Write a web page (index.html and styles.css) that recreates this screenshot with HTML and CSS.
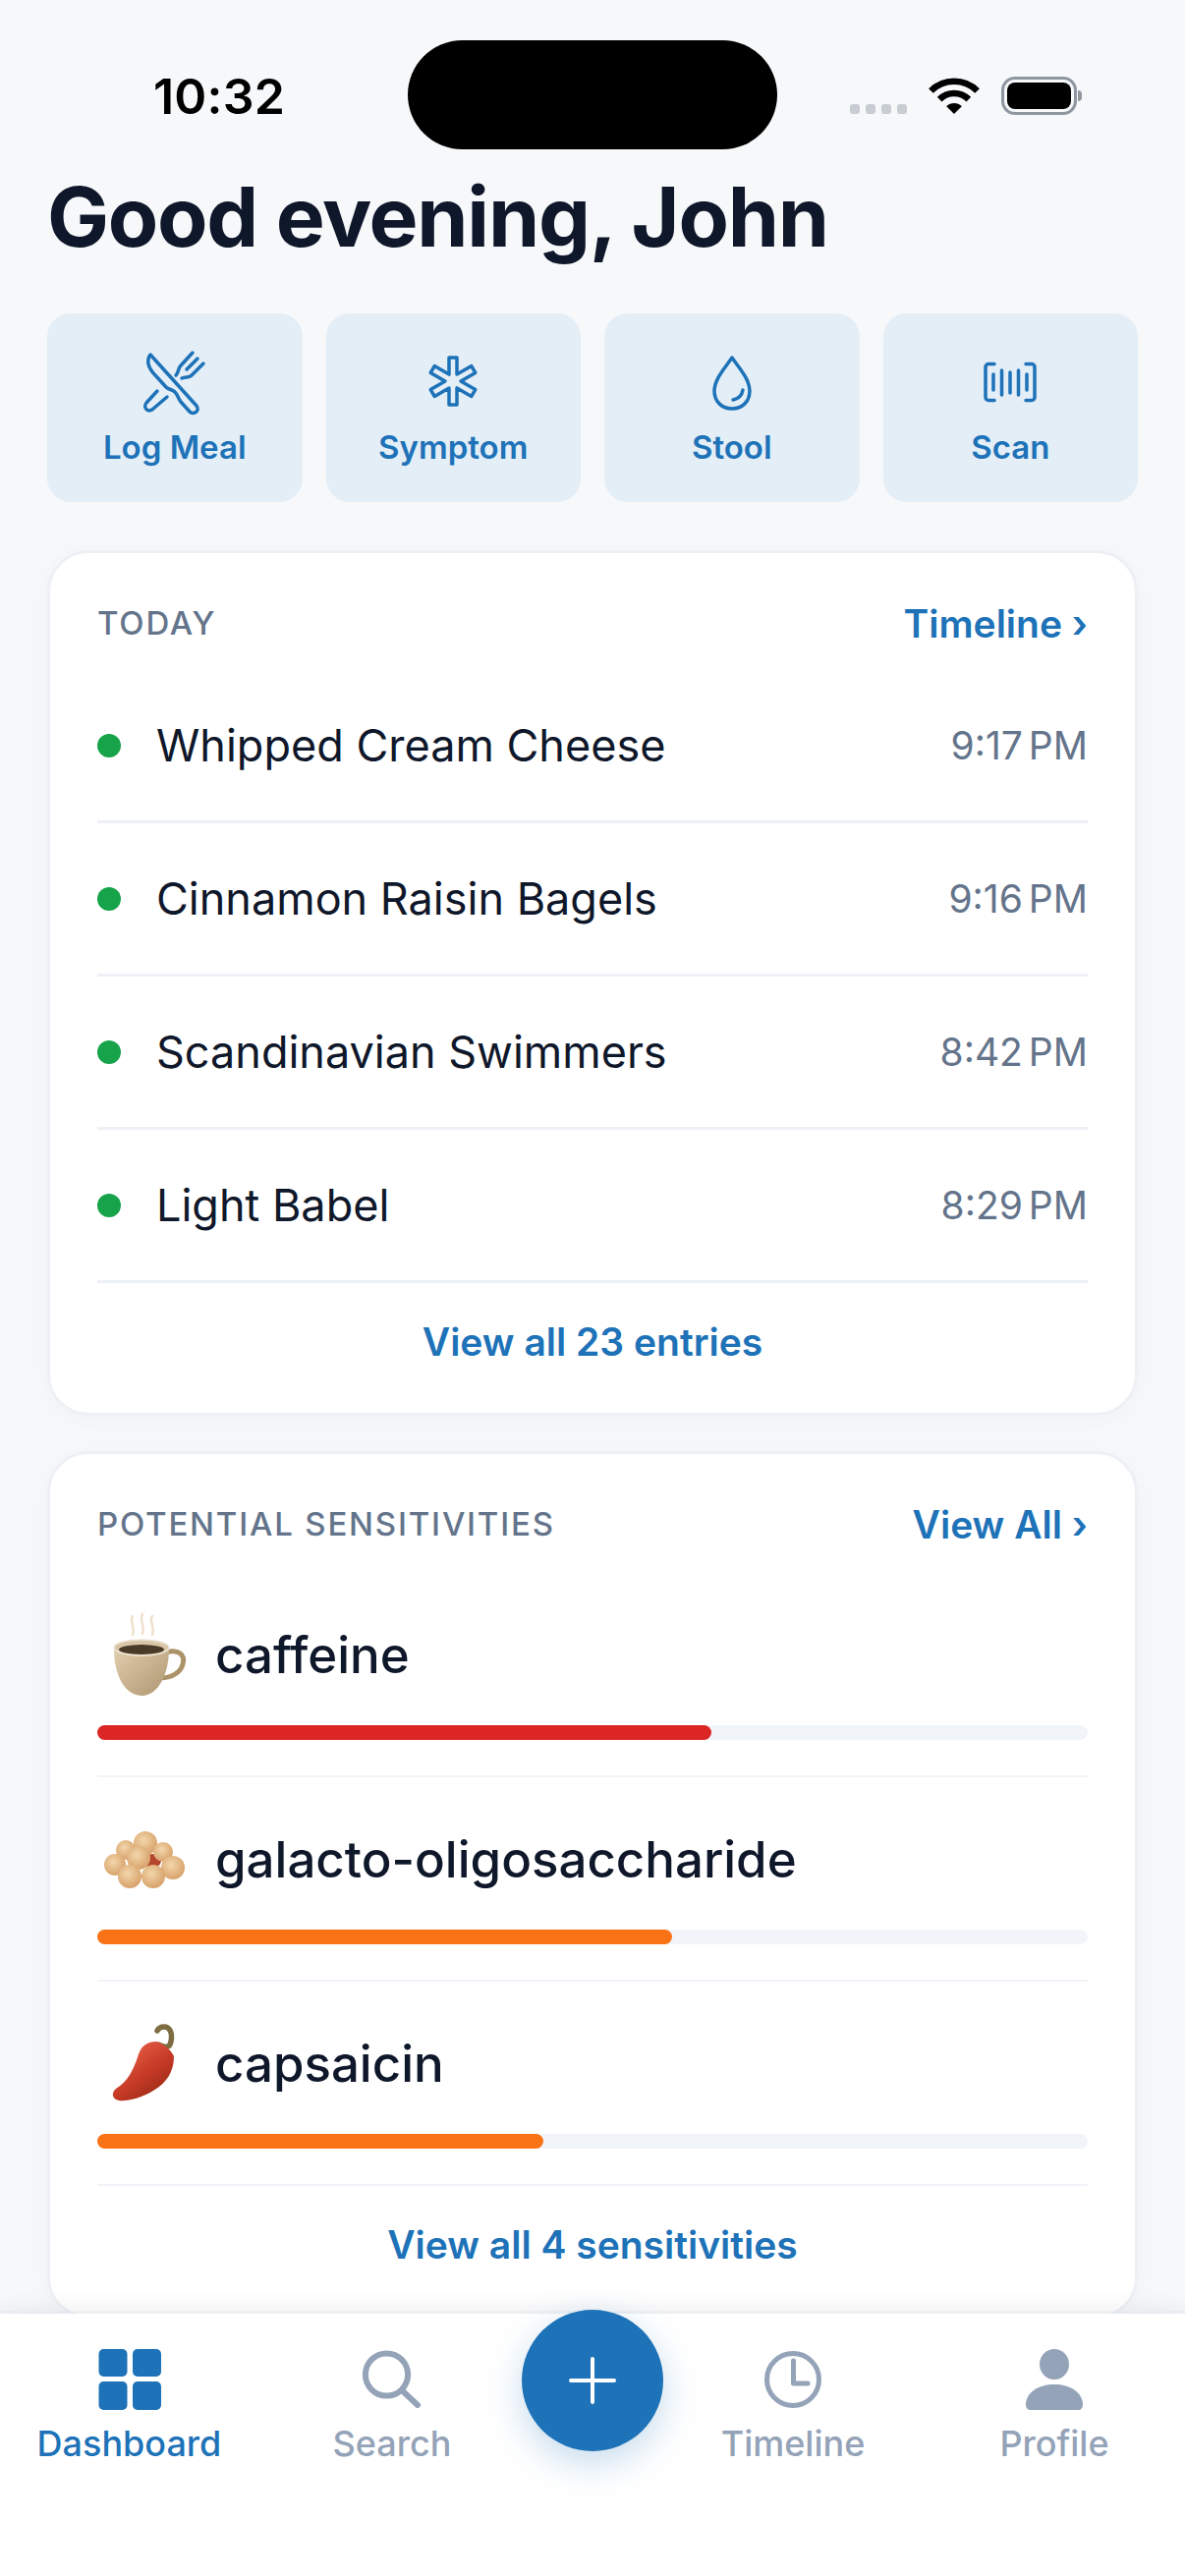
FILE: index.html
```html
<!DOCTYPE html>
<html lang="en">
<head>
    <meta charset="UTF-8">
    <meta name="viewport" content="width=device-width, initial-scale=1.0">
    <title>Dashboard</title>
    <link rel="stylesheet" href="styles.css">
</head>
<body>
    <div class="screen">

        <div class="status-bar">
            <div class="status-time">10:32</div>
            <div class="island"></div>
            <div class="status-icons">
                <div class="signal"><span></span><span></span><span></span><span></span></div>
                <svg class="wifi" width="52" height="38" viewBox="0 0 52 38">
                    <path d="M2.45 13.5A33.3 33.3 0 0 1 49.55 13.5" fill="none" stroke="#000" stroke-width="6.7"/>
                    <path d="M11.15 22.15A21 21 0 0 1 40.85 22.15" fill="none" stroke="#000" stroke-width="6.6"/>
                    <path d="M26 37L18.2 29.2A11 11 0 0 1 33.8 29.2Z" fill="#000"/>
                </svg>
                <div class="battery"><div class="battery-level"></div></div>
                <div class="battery-nub"></div>
            </div>
        </div>

        <h1 class="greeting">Good evening, John</h1>

        <div class="quick-actions">
            <div class="quick-btn">
                <svg class="quick-icon" width="72" height="72" viewBox="0 0 72 72">
                    <path d="M11 9L58 61C62 66 55 71 51 67L42 57C39 53 39 50 36 47C33 44 30 45 27 42L17 31C10 24 6 16 11 9Z"/>
                    <path d="M18 46L7 58C3 63 9 69 14 64L28 52"/>
                    <path d="M54 7L42 20C39 23 40 27 37 30"/>
                    <path d="M59 13L48 24"/>
                    <path d="M65 18L53 30C50 33 47 31 43 33"/>
                </svg>
                <span>Log Meal</span>
            </div>
            <div class="quick-btn">
                <svg class="quick-icon" width="72" height="72" viewBox="-36 -36 72 72">
                    <polygon points="-4,-24 4,-24 4,-6.93 18.78,-15.46 22.78,-8.54 8,0 22.78,8.54 18.78,15.46 4,6.93 4,24 -4,24 -4,6.93 -18.78,15.46 -22.78,8.54 -8,0 -22.78,-8.54 -18.78,-15.46 -4,-6.93"/>
                </svg>
                <span>Symptom</span>
            </div>
            <div class="quick-btn">
                <svg class="quick-icon" width="72" height="72" viewBox="0 0 72 72">
                    <path d="M36 12C28 24 18 34 18 46C18 57 26 64 36 64C46 64 54 57 54 46C54 34 44 24 36 12Z"/>
                    <path d="M37 55C42 54 46 51 47 45"/>
                </svg>
                <span>Stool</span>
            </div>
            <div class="quick-btn">
                <svg class="quick-icon" width="72" height="72" viewBox="0 0 72 72">
                    <path d="M20 18.5H14A3 3 0 0 0 11 21.5V52.5A3 3 0 0 0 14 55.5H20"/>
                    <path d="M52 18.5H58A3 3 0 0 1 61 21.5V52.5A3 3 0 0 1 58 55.5H52"/>
                    <path d="M19 29V45M27.5 25V50M36 27V48M44.5 25V50M53 29V45"/>
                </svg>
                <span>Scan</span>
            </div>
        </div>

        <div class="card">
            <div class="card-head">
                <span class="card-title">TODAY</span>
                <span class="card-link">Timeline ›</span>
            </div>
            <div class="entry"><i class="dot"></i><span class="entry-name">Whipped Cream Cheese</span><span class="entry-time">9:17 PM</span></div>
            <div class="entry"><i class="dot"></i><span class="entry-name">Cinnamon Raisin Bagels</span><span class="entry-time">9:16 PM</span></div>
            <div class="entry"><i class="dot"></i><span class="entry-name">Scandinavian Swimmers</span><span class="entry-time">8:42 PM</span></div>
            <div class="entry"><i class="dot"></i><span class="entry-name">Light Babel</span><span class="entry-time">8:29 PM</span></div>
            <div class="card-foot">View all 23 entries</div>
        </div>

        <div class="card card-sens">
            <div class="card-head">
                <span class="card-title">POTENTIAL SENSITIVITIES</span>
                <span class="card-link">View All ›</span>
            </div>

            <div class="sens">
                <div class="sens-top">
                    <svg class="emoji" width="96" height="96" viewBox="0 0 96 96">
                        <defs>
                            <linearGradient id="cupFill" x1="0" y1="0" x2="1" y2="1">
                                <stop offset="0" stop-color="#e2cfae"/>
                                <stop offset="1" stop-color="#ae9570"/>
                            </linearGradient>
                        </defs>
                        <g fill="none" stroke="#eee0cd" stroke-width="2.5" stroke-linecap="round">
                            <path d="M36 7C32 12 39 17 36 26"/>
                            <path d="M46 5C42 11 49 16 46 25"/>
                            <path d="M56 7C52 12 59 17 56 26"/>
                        </g>
                        <path d="M70 44C82 40 90 46 87 56C85 64 76 70 64 70" fill="none" stroke="#ab9269" stroke-width="5"/>
                        <path d="M17 40C17 66 27 87 45 88C62 88 73 66 73 40Z" fill="url(#cupFill)"/>
                        <ellipse cx="45" cy="39" rx="28" ry="8" fill="#d9c6a6" stroke="#eee6d8" stroke-width="1.5"/>
                        <ellipse cx="45" cy="41" rx="23" ry="5" fill="#4a3b28"/>
                    </svg>
                    <span class="sens-name">caffeine</span>
                </div>
                <div class="bar"><div class="bar-fill bar-red" style="width: 62%"></div></div>
            </div>

            <div class="sens">
                <div class="sens-top">
                    <svg class="emoji" width="96" height="96" viewBox="0 0 96 96">
                        <defs>
                            <radialGradient id="pea" cx="0.42" cy="0.38" r="0.7">
                                <stop offset="0" stop-color="#f3d6ab"/>
                                <stop offset="1" stop-color="#d49c63"/>
                            </radialGradient>
                        </defs>
                        <ellipse cx="56" cy="48" rx="9" ry="7" fill="#b5452c"/>
                        <g fill="url(#pea)">
                            <circle cx="49" cy="30" r="12"/>
                            <circle cx="29" cy="37" r="10"/>
                            <circle cx="67" cy="39" r="10"/>
                            <circle cx="18" cy="52" r="11"/>
                            <circle cx="42" cy="45" r="12"/>
                            <circle cx="77" cy="55" r="12"/>
                            <circle cx="33" cy="64" r="12"/>
                            <circle cx="57" cy="64" r="12"/>
                        </g>
                    </svg>
                    <span class="sens-name">galacto-oligosaccharide</span>
                </div>
                <div class="bar"><div class="bar-fill bar-orange" style="width: 58%"></div></div>
            </div>

            <div class="sens">
                <div class="sens-top">
                    <svg class="emoji" width="96" height="96" viewBox="0 0 96 96">
                        <defs>
                            <linearGradient id="chili" x1="0.2" y1="0.1" x2="0.8" y2="0.9">
                                <stop offset="0" stop-color="#e8614a"/>
                                <stop offset="0.55" stop-color="#c63a26"/>
                                <stop offset="1" stop-color="#9c2b18"/>
                            </linearGradient>
                        </defs>
                        <path d="M62 27C70 31 74 30 75 24C77 14 73 9 68 9C64 9 62 11 61 13" fill="none" stroke="#7d6d41" stroke-width="5.5" stroke-linecap="round"/>
                        <path d="M19 72C31 65 37 52 41 40C44 29 50 24 60 24C67 26 75 32 78 39C78 54 71 66 57 74C44 82 30 85 22 84C15 83 14 76 19 72Z" fill="url(#chili)"/>
                    </svg>
                    <span class="sens-name">capsaicin</span>
                </div>
                <div class="bar"><div class="bar-fill bar-orange" style="width: 45%"></div></div>
            </div>

            <div class="card-foot">View all 4 sensitivities</div>
        </div>

        <div class="tab-bar">
            <div class="tab tab-active">
                <svg width="72" height="72" viewBox="0 0 72 72">
                    <rect x="3.5" y="5" width="29" height="28" rx="5"/>
                    <rect x="38" y="5" width="29" height="28" rx="5"/>
                    <rect x="3.5" y="38" width="29" height="29" rx="5"/>
                    <rect x="38" y="38" width="29" height="29" rx="5"/>
                </svg>
                <span>Dashboard</span>
            </div>
            <div class="tab">
                <svg width="72" height="72" viewBox="0 0 72 72">
                    <circle cx="30.5" cy="31" r="21.6" class="tab-line"/>
                    <path d="M46 47L62 62" class="tab-line"/>
                </svg>
                <span>Search</span>
            </div>
            <div class="fab">
                <svg width="50" height="50" viewBox="0 0 50 50">
                    <path d="M25 3V47M3 25H47" fill="none" stroke="#fff" stroke-width="4" stroke-linecap="round"/>
                </svg>
            </div>
            <div class="tab">
                <svg width="72" height="72" viewBox="0 0 72 72">
                    <circle cx="36" cy="36" r="26.5" class="tab-line tab-thin"/>
                    <path d="M36.5 17V40H51" class="tab-line tab-thin"/>
                </svg>
                <span>Timeline</span>
            </div>
            <div class="tab">
                <svg width="72" height="72" viewBox="0 0 72 72">
                    <ellipse cx="36" cy="20.5" rx="15" ry="15.5"/>
                    <path d="M7 62C7 49 20 41 36 41C52 41 65 49 65 62C65 65 63 67 60 67H12C9 67 7 65 7 62Z"/>
                </svg>
                <span>Profile</span>
            </div>
        </div>
    </div>
</body>
</html>
```

FILE: styles.css
```css
:root {
    --primary-color: #1d72b8;
    --background-color: #f7f8fa;
    --text-color: #0f172a;
    --muted-color: #64748b;
    --tab-color: #94a3b8;
    --line-color: #edf0f5;
}

* {
    margin: 0;
    padding: 0;
    box-sizing: border-box;
}

body {
    font-family: 'Inter', sans-serif;
    background-color: var(--background-color);
    color: var(--text-color);
}

.screen {
    position: relative;
    width: 1206px;
    height: 2622px;
    overflow: hidden;
}

/* status bar */
.status-bar {
    display: grid;
    grid-template-columns: 415px 376px 415px;
    padding-top: 41px;
    height: 152px;
}

.status-time {
    font-size: 50px;
    font-weight: 600;
    line-height: 60px;
    color: #000;
    margin-top: 27px;
    padding-left: 156px;
    letter-spacing: 0.2px;
}

.island {
    background-color: #000;
    border-radius: 56px;
    height: 111px;
}

.status-icons {
    display: flex;
    align-items: flex-start;
    padding-top: 37px;
    padding-left: 74px;
}

.signal {
    display: flex;
    gap: 6px;
    margin-top: 28px;
}

.signal span {
    width: 10px;
    height: 10px;
    border-radius: 3px;
    background-color: #c8ccd3;
}

.wifi {
    margin-left: 22px;
    margin-top: 1px;
}

.battery {
    width: 77px;
    height: 39px;
    margin-left: 22px;
    border: 3px solid #8e96a0;
    border-radius: 14px;
    padding: 3px;
}

.battery-level {
    height: 100%;
    background-color: #000;
    border-radius: 8px;
}

.battery-nub {
    width: 4px;
    height: 11px;
    margin-top: 14px;
    margin-left: 1px;
    background-color: #8e96a0;
    border-radius: 0 4px 4px 0;
}

.greeting {
    font-size: 84px;
    font-weight: 700;
    line-height: 96px;
    margin: 21px 0 50px 48px;
    letter-spacing: -1.25px;
}

/* quick actions */
.quick-actions {
    display: grid;
    grid-template-columns: repeat(4, 1fr);
    gap: 24px;
    padding: 0 48px;
    margin-bottom: 49px;
}

.quick-btn {
    display: flex;
    flex-direction: column;
    align-items: center;
    height: 192px;
    padding-top: 33px;
    background-color: #e3eef7;
    border-radius: 24px;
    color: var(--primary-color);
    font-size: 33px;
    font-weight: 600;
    line-height: 40px;
}

.quick-btn span {
    margin-top: 11px;
}

.quick-icon {
    fill: none;
    stroke: var(--primary-color);
    stroke-width: 3.5;
    stroke-linecap: round;
    stroke-linejoin: round;
}

/* cards */
.card {
    margin: 0 48px 36px;
    padding: 0 48px;
    background-color: #fff;
    border: 3px solid var(--line-color);
    border-radius: 42px;
    box-shadow: 0 3px 24px rgba(15, 23, 42, 0.03);
}

.card-head {
    display: flex;
    align-items: center;
    justify-content: space-between;
    height: 119px;
    padding: 48px 0 25px;
}

.card-sens .card-head {
    height: 121px;
    padding-bottom: 27px;
}

.card-title {
    font-size: 33px;
    font-weight: 500;
    letter-spacing: 1.8px;
    color: var(--muted-color);
}

.card-link {
    font-size: 39px;
    font-weight: 600;
    color: var(--primary-color);
}

.entry {
    display: flex;
    align-items: center;
    height: 156px;
    border-bottom: 3px solid var(--line-color);
}

.dot {
    width: 24px;
    height: 24px;
    margin-right: 36px;
    border-radius: 50%;
    background-color: #16a34a;
}

.entry-name {
    flex: 1;
    font-size: 45px;
}

.entry-time {
    font-size: 39px;
    word-spacing: -5px;
    color: var(--muted-color);
}

.card-foot {
    padding: 36px 0 48px;
    font-size: 39px;
    font-weight: 600;
    line-height: 48px;
    text-align: center;
    color: var(--primary-color);
}

.sens {
    height: 208px;
    padding-top: 37px;
    border-bottom: 2px solid #f1f5f9;
}

.sens-top {
    display: flex;
    align-items: center;
    gap: 24px;
    height: 96px;
    margin-bottom: 22px;
}

.sens-name {
    font-size: 51px;
    font-weight: 500;
    margin-bottom: 3px;
}

.bar {
    height: 15px;
    border-radius: 8px;
    background-color: #f1f5f9;
}

.bar-fill {
    height: 100%;
    border-radius: 8px;
}

.bar-red {
    background-color: #dc2626;
}

.bar-orange {
    background-color: #f97316;
}

/* bottom tabs */
.tab-bar {
    position: absolute;
    left: 0;
    right: 0;
    bottom: 0;
    height: 267px;
    display: grid;
    grid-template-columns: 266px 266px 142px 266px 266px;
    background-color: #fff;
    box-shadow: 0 -3px 0 rgba(226, 232, 240, 0.4), 0 -4px 24px rgba(15, 23, 42, 0.07);
}

.tab {
    display: flex;
    flex-direction: column;
    align-items: center;
    padding-top: 31px;
    font-size: 36px;
    font-weight: 500;
    line-height: 44px;
    color: var(--tab-color);
    fill: var(--tab-color);
}

.tab span {
    margin-top: 7px;
}

.tab-active {
    color: var(--primary-color);
    fill: var(--primary-color);
}

.tab-active span {
    margin-right: 3px;
}

.tab-line {
    fill: none;
    stroke: var(--tab-color);
    stroke-width: 6;
    stroke-linecap: round;
    stroke-linejoin: round;
}

.tab-thin {
    stroke-width: 5;
}

.fab {
    display: flex;
    align-items: center;
    justify-content: center;
    width: 144px;
    height: 144px;
    margin: -4px 0 0 -1px;
    border-radius: 50%;
    background-color: var(--primary-color);
    box-shadow: 0 12px 36px rgba(29, 114, 184, 0.25);
}
```
